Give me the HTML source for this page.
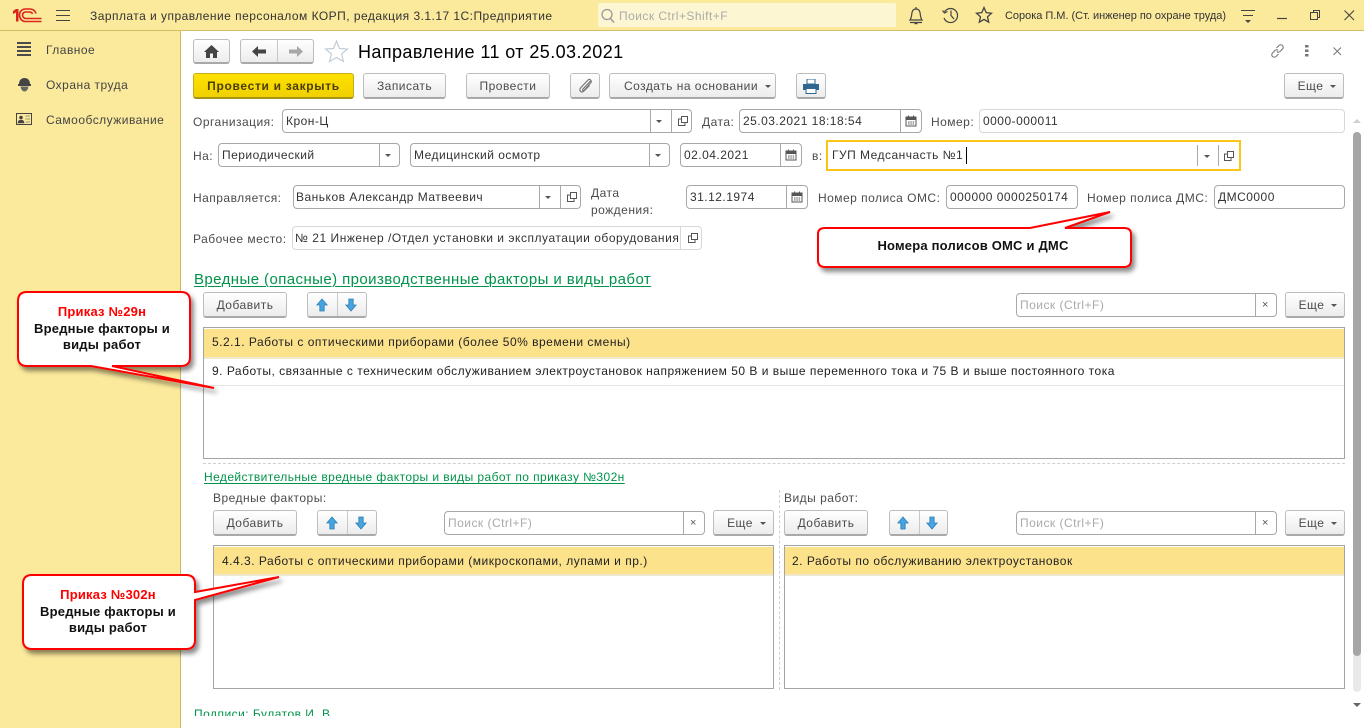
<!DOCTYPE html>
<html lang="ru"><head><meta charset="utf-8"><title>Направление</title>
<style>
html,body{margin:0;padding:0;width:1364px;height:728px;overflow:hidden;background:#fff}
body{font-family:"Liberation Sans",sans-serif;font-size:12px;color:#4b4b4b;letter-spacing:.48px;position:relative}
.a,.t,.f,.b{position:absolute;box-sizing:border-box}
.t{white-space:nowrap;line-height:14px}
.d{color:#222}
.f{background:#fff;border:1px solid #a8a8a8;border-radius:4px;height:24px;line-height:22px;padding-left:3px;color:#333;white-space:nowrap;overflow:hidden}
.l{border-color:#d8d8d8}
.f i{position:absolute;top:0;bottom:0;width:1px;background:#a8a8a8}
.f.l i{background:#d8d8d8}
.f u{position:absolute;top:10px;width:0;height:0;border:3px solid transparent;border-top:3px solid #555;border-bottom:0}
.f svg{position:absolute;top:5px}
.ph{color:#aaa}
.b{background:linear-gradient(#fff,#ececec);border:1px solid #bdbdbd;border-bottom:2px solid #a9a9a9;border-radius:3px;text-align:center;line-height:22px;color:#4b4b4b;white-space:nowrap}
.b u{display:inline-block;width:0;height:0;border:3px solid transparent;border-top:3px solid #555;border-bottom:0;vertical-align:2px;margin-left:7px}
.e{padding-left:6px}
.g{color:#00934a;text-decoration:underline;text-decoration-thickness:1px;text-underline-offset:2px}
.c{position:absolute;text-align:center;font-weight:bold;color:#111;letter-spacing:.2px;font-size:13px;line-height:16.500px}
.c span{color:#f00}
</style></head><body>
<svg width="0" height="0" style="position:absolute"><defs>
<symbol id="pick" viewBox="0 0 12 12"><path d="M4.500 1.500h6v6h-6zM4.500 4H1.500v6.500H8V7.500" fill="none" stroke="#555"/></symbol>
<symbol id="cal" viewBox="0 0 12 12"><path d="M1 2h10v9H1z" fill="none" stroke="#555"/><path d="M1 2h10v3H1zM3 .5h1v2H3zM8 .5h1v2H8z" fill="#555"/><path d="M3 6.500h1.500v1H3zM5.300 6.500h1.500v1H5.300zM7.600 6.500h1.500v1H7.600zM3 8.500h1.500v1H3zM5.300 8.500h1.500v1H5.300zM7.600 8.500h1.500v1H7.600z" fill="#555"/></symbol>
<symbol id="up" viewBox="0 0 14 16"><path d="M7 1 13 8H9.500V15H4.500V8H1Z" fill="#48a4e0" stroke="#2c7fb5"/></symbol>
<symbol id="dn" viewBox="0 0 14 16"><path d="M7 15 13 8H9.500V1H4.500V8H1Z" fill="#48a4e0" stroke="#2c7fb5"/></symbol>
<filter id="sh" x="-20%" y="-30%" width="140%" height="170%"><feDropShadow dx="3" dy="4" stdDeviation="2.500" flood-color="#000" flood-opacity=".45"/></filter>
</defs></svg>

<!-- top bar -->
<div class="a" style="left:0;top:0;width:1364px;height:31px;background:#fbe99c;border-bottom:1px solid #cfbd67"></div>
<svg class="a" style="left:12px;top:8px" width="32" height="16" viewBox="0 0 32 16"><path d="M1 3 4 1H6.500V13.500H4V4.500L1 6Z" fill="#d9251c"/><g fill="none" stroke="#d9251c" stroke-width="1.600"><path d="M24 5.500C23 2.500 21 1 18 1H13.500C10 1 7.500 3.500 7.500 7S10 13.500 13.500 13.500H29.500"/><path d="M20.500 6C20 4.800 19 4 18 4H13.500C12 4 10.500 5.300 10.500 7S12 10.500 13.500 10.500H29.500"/></g></svg>
<svg class="a" style="left:56px;top:9px" width="15" height="13"><path d="M0 1.500H14M0 6.500H14M0 11.500H14" stroke="#444"/></svg>
<div class="t d" style="left:90px;top:9px;letter-spacing:.465px;color:#333">Зарплата и управление персоналом КОРП, редакция 3.1.17 1С:Предприятие</div>
<div class="a" style="left:598px;top:3px;width:298px;height:24px;background:#fdf6d2;border-radius:2px"></div>
<svg class="a" style="left:600px;top:8px" width="16" height="16"><circle cx="7" cy="6.500" r="5" fill="none" stroke="#999" stroke-width="1.300"/><path d="M10.500 10.500 14 14.500" stroke="#999" stroke-width="1.500"/></svg>
<div class="t" style="left:619px;top:9px;color:#aaa;letter-spacing:.47px">Поиск Ctrl+Shift+F</div>
<svg class="a" style="left:907px;top:6px" width="18" height="19" viewBox="0 0 18 19" fill="none" stroke="#444" stroke-width="1.200"><path d="M3 14C5 11 4.500 9 5 6.500 5.500 4 7 3 9 3S12.500 4 13 6.500C13.500 9 13 11 15 14Z"/><path d="M9 1V3M3 16.500H15" /><path d="M7.500 17.500H10.500" stroke-width="1.400"/></svg>
<svg class="a" style="left:941px;top:6px" width="19" height="19" viewBox="0 0 19 19" fill="none" stroke="#444" stroke-width="1.200"><path d="M3.500 6A7 7 0 1 1 3 12"/><path d="M1.500 4.500 3.500 7 6.500 5.500M10 4.500V9.500L13 13"/></svg>
<svg class="a" style="left:975px;top:6px" width="18" height="18" viewBox="0 0 18 18"><path d="M9 1.500 11.200 6.600 16.500 7.200 12.500 10.800 13.700 16.200 9 13.400 4.300 16.200 5.500 10.800 1.500 7.200 6.800 6.600Z" fill="none" stroke="#444" stroke-width="1.300"/></svg>
<div class="t d" style="left:1005px;top:9px;font-size:11px;letter-spacing:-.02px;color:#333">Сорока П.М. (Ст. инженер по охране труда)</div>
<svg class="a" style="left:1240px;top:9px" width="16" height="15"><path d="M1 1.500H15M3 6.500H13" stroke="#444"/><path d="M5 11H11L8 14Z" fill="#444"/></svg>
<svg class="a" style="left:1277px;top:17px" width="11" height="3"><path d="M0 1.500H10" stroke="#444" stroke-width="1.200"/></svg>
<svg class="a" style="left:1310px;top:10px" width="11" height="11" fill="none" stroke="#444"><path d="M3.500 2.500V.5H9.500V7.500H7.500M.5 2.500H7.500V9.500H.5Z"/></svg>
<svg class="a" style="left:1344px;top:10px" width="11" height="11"><path d="M.5 .5 10 10M10 .5 .5 10" stroke="#444" stroke-width="1.100"/></svg>

<!-- sidebar -->
<div class="a" style="left:0;top:31px;width:181px;height:697px;background:#fbe99c;border-right:1px solid #c9b66b"></div>
<svg class="a" style="left:17px;top:42px" width="15" height="14"><path d="M0 1H14M0 5H14M0 9H14M0 13H14" stroke="#4a4a4a" stroke-width="2"/></svg>
<svg class="a" style="left:18px;top:77px" width="13" height="15" viewBox="0 0 13 15"><path d="M1 7C1 3 3.500 1 6.500 1S12 3 12 7Z" fill="#444"/><path d="M0 7H13V9H0Z" fill="#444"/><path d="M2.500 9.500C3 13 5 14.500 6.500 14.500S10 13 10.500 9.500Z" fill="#666"/></svg>
<svg class="a" style="left:16px;top:112px" width="16" height="14" viewBox="0 0 16 14"><rect x=".5" y="1.500" width="15" height="11" fill="none" stroke="#444"/><circle cx="5" cy="5.500" r="1.800" fill="#444"/><path d="M2 11C2 8.500 3.500 8 5 8S8 8.500 8 11ZM9.500 4H14M9.500 7H14M9.500 10H14" fill="#444" stroke="#444" stroke-width=".6"/></svg>
<div class="t" style="left:46px;top:43px;color:#444">Главное</div>
<div class="t" style="left:46px;top:78px;color:#444">Охрана труда</div>
<div class="t" style="left:46px;top:113px;color:#444">Самообслуживание</div>

<!-- header -->
<div class="b" style="left:193px;top:39px;width:37px;height:25px"></div>
<svg class="a" style="left:204px;top:45px" width="15" height="13" viewBox="0 0 15 13"><path d="M7.500 0 15 7H13V13H9V8.500H6V13H2V7H0Z" fill="#444"/></svg>
<div class="b" style="left:240px;top:39px;width:74px;height:25px"></div>
<div class="a" style="left:277px;top:40px;width:1px;height:22px;background:#c8c8c8"></div>
<svg class="a" style="left:252px;top:46px" width="14" height="11"><path d="M0 5.500 6 0V3.500H14V7.500H6V11Z" fill="#444"/></svg>
<svg class="a" style="left:289px;top:46px" width="14" height="11"><path d="M14 5.500 8 0V3.500H0V7.500H8V11Z" fill="#a8a8a8"/></svg>
<svg class="a" style="left:324px;top:39px" width="25" height="24" viewBox="0 0 25 24"><path d="M12.500 2 15.500 9.500 23.500 10 17.500 15 19.500 22.500 12.500 18.500 5.500 22.500 7.500 15 1.500 10 9.500 9.500Z" fill="#fff" stroke="#c3cdd6" stroke-width="1.200"/></svg>
<div class="t" style="left:358px;top:41px;font-size:18px;line-height:22px;color:#000;letter-spacing:.41px">Направление 11 от 25.03.2021</div>
<svg class="a" style="left:1270px;top:43px" width="15" height="16" viewBox="0 0 15 16" fill="none" stroke="#777" stroke-width="1.100"><path d="M6.500 5 9 2.500C10 1.500 11.500 1.500 12.500 2.500S13.500 5 12.500 6L10 8.500C9 9.500 7.500 9.500 6.800 8.500"/><path d="M8.500 11 6 13.500C5 14.500 3.500 14.500 2.500 13.500S1.500 11 2.500 10L5 7.500C6 6.500 7.500 6.500 8.200 7.500"/></svg>
<svg class="a" style="left:1305px;top:45px" width="4" height="12"><path d="M0 0H3.500V2.500H0ZM0 4.500H3.500V7H0ZM0 9H3.500V11.500H0Z" fill="#777"/></svg>
<svg class="a" style="left:1333px;top:47px" width="9" height="9"><path d="M.5 .5 8 8M8 .5 .5 8" stroke="#777"/></svg>

<!-- command bar -->
<div class="b" style="left:193px;top:73px;width:161px;height:26px;background:linear-gradient(#ffe200,#f0d000);border-color:#c6ac1c #c6ac1c #a89415;font-weight:bold;color:#4a3f00;line-height:24px;letter-spacing:.69px">Провести и закрыть</div>
<div class="b" style="left:363px;top:73px;width:83px;height:26px;line-height:24px">Записать</div>
<div class="b" style="left:466px;top:73px;width:84px;height:26px;line-height:24px">Провести</div>
<div class="b" style="left:570px;top:73px;width:30px;height:26px"></div>
<svg class="a" style="left:578px;top:78px" width="14" height="15" viewBox="0 0 14 15" fill="none" stroke="#777" stroke-width="1.200"><path d="M12.500 3 5 11C4 12 5 13 6 12.500L13 4.500C14 2.500 11.500 .5 10 2L2.500 10C.5 12.500 3.500 15.500 6 13L11.500 7.500"/></svg>
<div class="b" style="left:609px;top:73px;width:167px;height:26px;line-height:24px;padding-left:10px">Создать на основании<u></u></div>
<div class="b" style="left:796px;top:73px;width:30px;height:26px"></div>
<svg class="a" style="left:803px;top:79px" width="16" height="15" viewBox="0 0 16 15"><path d="M4 0H12V5H4Z" fill="#fff" stroke="#2f6790"/><path d="M0 5H16V11H13V9H3V11H0Z" fill="#2f6790"/><path d="M3 9.500H13V14.500H3Z" fill="#fff" stroke="#2f6790"/></svg>
<div class="b e" style="left:1284px;top:73px;width:60px;height:26px;line-height:24px">Еще<u></u></div>

<!-- fields -->
<div class="t" style="left:193px;top:115px">Организация:</div>
<div class="f" style="left:282px;top:109px;width:410px">Крон-Ц<i style="left:367px"></i><u style="left:373px"></u><i style="left:388px"></i><svg style="left:394px" width="12" height="12"><use href="#pick"/></svg></div>
<div class="t" style="left:702px;top:115px">Дата:</div>
<div class="f" style="left:739px;top:109px;width:183px">25.03.2021 18:18:54<i style="left:160px"></i><svg style="left:165px" width="12" height="12"><use href="#cal"/></svg></div>
<div class="t" style="left:931px;top:115px">Номер:</div>
<div class="f l" style="left:979px;top:109px;width:366px">0000-000011</div>

<div class="t" style="left:193px;top:149px">На:</div>
<div class="f" style="left:218px;top:143px;width:182px">Периодический<i style="left:160px"></i><u style="left:166px"></u></div>
<div class="f" style="left:410px;top:143px;width:260px">Медицинский осмотр<i style="left:238px"></i><u style="left:244px"></u></div>
<div class="f" style="left:680px;top:143px;width:122px">02.04.2021<i style="left:99px"></i><svg style="left:104px" width="12" height="12"><use href="#cal"/></svg></div>
<div class="t" style="left:812px;top:149px">в:</div>
<div class="f" style="left:826px;top:140px;width:415px;height:31px;border:2px solid #fbc518;border-radius:0;line-height:27px;padding-left:4px">ГУП Медсанчасть №1<i style="left:369px;top:3px;bottom:3px"></i><u style="left:376px;top:13px"></u><i style="left:390px;top:3px;bottom:3px"></i><svg style="left:395px;top:8px" width="12" height="12"><use href="#pick"/></svg><i style="left:138px;top:5px;bottom:5px;background:#000"></i></div>

<div class="t" style="left:193px;top:191px">Направляется:</div>
<div class="f" style="left:293px;top:185px;width:288px;padding-left:2px;letter-spacing:.5px">Ваньков Александр Матвеевич<i style="left:245px"></i><u style="left:251px"></u><i style="left:266px"></i><svg style="left:272px" width="12" height="12"><use href="#pick"/></svg></div>
<div class="t" style="left:591px;top:186px">Дата</div>
<div class="t" style="left:591px;top:203px">рождения:</div>
<div class="f" style="left:686px;top:185px;width:122px">31.12.1974<i style="left:99px"></i><svg style="left:104px" width="12" height="12"><use href="#cal"/></svg></div>
<div class="t" style="left:818px;top:191px">Номер полиса ОМС:</div>
<div class="f" style="left:946px;top:185px;width:132px">000000 0000250174</div>
<div class="t" style="left:1087px;top:191px">Номер полиса ДМС:</div>
<div class="f" style="left:1214px;top:185px;width:131px">ДМС0000</div>

<div class="t" style="left:193px;top:232px">Рабочее место:</div>
<div class="f l" style="left:292px;top:226px;width:410px;padding-left:2px;letter-spacing:.53px">№ 21 Инженер /Отдел установки и эксплуатации оборудования<i style="left:387px"></i><svg style="left:394px" width="12" height="12"><use href="#pick"/></svg></div>

<div class="t g" style="left:194px;top:271px;font-size:15px;line-height:17px;letter-spacing:.42px">Вредные (опасные) производственные факторы и виды работ</div>

<!-- toolbar 1 -->
<div class="b" style="left:203px;top:292px;width:84px;height:26px;line-height:24px">Добавить</div>
<div class="b" style="left:307px;top:292px;width:60px;height:26px"></div>
<div class="a" style="left:337px;top:293px;width:1px;height:23px;background:#c8c8c8"></div>
<svg class="a" style="left:316px;top:298px" width="12" height="14"><use href="#up"/></svg>
<svg class="a" style="left:345px;top:298px" width="12" height="14"><use href="#dn"/></svg>
<div class="f ph" style="left:1016px;top:293px;width:261px">Поиск (Ctrl+F)<i style="left:238px"></i><span style="position:absolute;left:245px;top:0;color:#555;font-size:11px">×</span></div>
<div class="b e" style="left:1285px;top:292px;width:60px;height:26px;line-height:24px">Еще<u></u></div>

<!-- table 1 -->
<div class="a" style="left:203px;top:327px;width:1142px;height:132px;border:1px solid #a5a5a5;background:#fff">
  <div class="a" style="left:0;top:1px;width:1140px;height:28px;background:#fde28c;border-bottom:2px solid #efe9d0;box-sizing:content-box"></div>
  <div class="a" style="left:0;top:57px;width:1140px;height:1px;background:#e4e4e4"></div>
</div>
<div class="t d" style="left:212px;top:335px;letter-spacing:.5px">5.2.1. Работы с оптическими приборами (более 50% времени смены)</div>
<div class="t d" style="left:212px;top:364px;letter-spacing:.495px">9. Работы, связанные с техническим обслуживанием электроустановок напряжением 50 В и выше переменного тока и 75 В и выше постоянного тока</div>

<div class="a" style="left:203px;top:463px;width:1142px;border-top:1px dashed #d0d0d0"></div>
<div class="t g" style="left:204px;top:470px;letter-spacing:.42px">Недействительные вредные факторы и виды работ по приказу №302н</div>

<div class="t" style="left:213px;top:491px">Вредные факторы:</div>
<div class="t" style="left:784px;top:491px">Виды работ:</div>
<div class="a" style="left:779px;top:490px;height:200px;border-left:1px dashed #d0d0d0"></div>

<!-- toolbar left -->
<div class="b" style="left:213px;top:510px;width:84px;height:26px;line-height:24px">Добавить</div>
<div class="b" style="left:317px;top:510px;width:60px;height:26px"></div>
<div class="a" style="left:347px;top:511px;width:1px;height:23px;background:#c8c8c8"></div>
<svg class="a" style="left:326px;top:516px" width="12" height="14"><use href="#up"/></svg>
<svg class="a" style="left:355px;top:516px" width="12" height="14"><use href="#dn"/></svg>
<div class="f ph" style="left:444px;top:511px;width:261px">Поиск (Ctrl+F)<i style="left:238px"></i><span style="position:absolute;left:245px;top:0;color:#555;font-size:11px">×</span></div>
<div class="b e" style="left:713px;top:510px;width:61px;height:26px;line-height:24px">Еще<u></u></div>

<!-- toolbar right -->
<div class="b" style="left:784px;top:510px;width:84px;height:26px;line-height:24px">Добавить</div>
<div class="b" style="left:889px;top:510px;width:59px;height:26px"></div>
<div class="a" style="left:919px;top:511px;width:1px;height:23px;background:#c8c8c8"></div>
<svg class="a" style="left:897px;top:516px" width="12" height="14"><use href="#up"/></svg>
<svg class="a" style="left:926px;top:516px" width="12" height="14"><use href="#dn"/></svg>
<div class="f ph" style="left:1016px;top:511px;width:261px">Поиск (Ctrl+F)<i style="left:238px"></i><span style="position:absolute;left:245px;top:0;color:#555;font-size:11px">×</span></div>
<div class="b e" style="left:1285px;top:510px;width:60px;height:26px;line-height:24px">Еще<u></u></div>

<!-- tables 2 -->
<div class="a" style="left:213px;top:545px;width:561px;height:144px;border:1px solid #a5a5a5">
  <div class="a" style="left:0;top:1px;width:559px;height:27px;background:#fde28c;border-bottom:2px solid #efe9d0;box-sizing:content-box"></div>
</div>
<div class="t d" style="left:222px;top:554px;letter-spacing:.5px">4.4.3. Работы с оптическими приборами (микроскопами, лупами и пр.)</div>
<div class="a" style="left:784px;top:545px;width:561px;height:144px;border:1px solid #a5a5a5">
  <div class="a" style="left:0;top:1px;width:559px;height:27px;background:#fde28c;border-bottom:2px solid #efe9d0;box-sizing:content-box"></div>
</div>
<div class="t d" style="left:792px;top:554px;letter-spacing:.5px">2. Работы по обслуживанию электроустановок</div>

<div class="a" style="left:194px;top:704px;width:200px;height:12px;overflow:hidden"><div class="t" style="left:0;top:3px;color:#00934a">Подписи: Булатов И. В.</div></div>

<!-- scrollbar -->
<svg class="a" style="left:1353px;top:118px" width="8" height="6"><path d="M4 1 8 5H0Z" fill="#d0d0d0"/></svg>
<div class="a" style="left:1353px;top:132px;width:8px;height:560px;background:#e9e9e9;border-radius:4px"></div>
<div class="a" style="left:1353px;top:132px;width:8px;height:524px;background:#a6a6a6;border-radius:4px"></div>
<svg class="a" style="left:1353px;top:702px" width="8" height="6"><path d="M4 5 8 1H0Z" fill="#666"/></svg>

<!-- callouts -->
<svg class="a" style="left:0;top:0" width="1364" height="728" viewBox="0 0 1364 728">
  <path filter="url(#sh)" d="M825 228H1030L1110 212 1065 228H1124Q1131 228 1131 234V260Q1131 267 1124 267H825Q818 267 818 260V234Q818 228 825 228Z" fill="#fff" stroke="#f00" stroke-width="2"/>
  <path filter="url(#sh)" d="M27 292H181Q190 292 190 301V357Q190 366 181 366H112L214 388 91 366H27Q18 366 18 357V301Q18 292 27 292Z" fill="#fff" stroke="#f00" stroke-width="2"/>
  <path filter="url(#sh)" d="M32 575H186Q195 575 195 584V592L279 577 195 600V640Q195 649 186 649H32Q23 649 23 640V584Q23 575 32 575Z" fill="#fff" stroke="#f00" stroke-width="2"/>
</svg>
<div class="c" style="left:818px;top:238px;width:310px">Номера полисов ОМС и ДМС</div>
<div class="c" style="left:16px;top:304px;width:172px"><span>Приказ №29н</span><br>Вредные факторы и<br>виды работ</div>
<div class="c" style="left:22px;top:587px;width:172px"><span>Приказ №302н</span><br>Вредные факторы и<br>виды работ</div>
</body></html>
